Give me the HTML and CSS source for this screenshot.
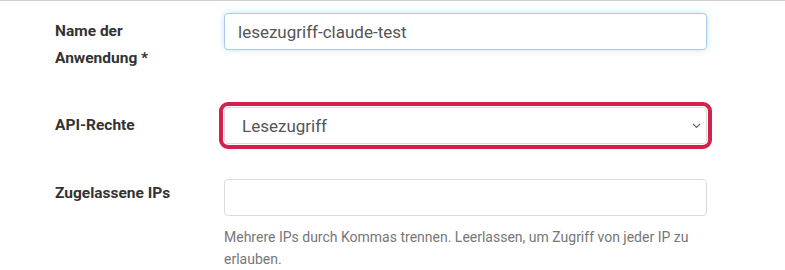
FILE: index.html
```html
<!DOCTYPE html>
<html lang="de">
<head>
    <meta charset="UTF-8">
    <meta name="viewport" content="width=device-width, initial-scale=1.0">
    <title>Anwendung</title>
    <link rel="stylesheet" href="styles.css">
</head>
<body>
    <div class="form">
        <div class="form-row">
            <label for="appname">Name der Anwendung *</label>
            <div class="field">
                <input type="text" id="appname" class="focused" value="lesezugriff-claude-test">
            </div>
        </div>
        <div class="form-row">
            <label for="rights">API-Rechte</label>
            <div class="field select-wrap">
                <select id="rights" class="highlight">
                    <option>Lesezugriff</option>
                    <option>Schreibzugriff</option>
                </select>
                <svg class="chevron" width="9" height="6" viewBox="0 0 9 6">
                    <path d="M1 1 L4.5 4.5 L8 1" fill="none" stroke="#666" stroke-width="1.2"/>
                </svg>
            </div>
        </div>
        <div class="form-row ips">
            <label for="ips">Zugelassene IPs</label>
            <div class="field">
                <input type="text" id="ips">
                <p class="help">Mehrere IPs durch Kommas trennen. Leerlassen, um Zugriff von jeder IP zu erlauben.</p>
            </div>
        </div>
    </div>
</body>
</html>
```

FILE: styles.css
```css
* {
    margin: 0px;
    padding: 0px;
    box-sizing: border-box;
}
body{
    font-family: Roboto, "Noto Sans", sans-serif;
    background: #fff;
    color: #333;
    border-top: 1px solid #cfcfcf;
    overflow: hidden;
}
.form{
    padding: 12px 0 0 55px;
}
.form-row{
    display: grid;
    grid-template-columns: 169px 483px;
    margin-bottom: 35px;
}
.form-row:last-child{
    margin-bottom: 0;
}
.form-row label{
    font-size: 15.5px;
    font-weight: 700;
    line-height: 27px;
    padding-top: 5px;
    padding-right: 50px;
    color: #333;
}
.form-row.ips label{
    padding-top: 1px;
}
.field input,
.field select{
    display: block;
    width: 100%;
    height: 37px;
    padding: 0 13px;
    font-family: Roboto, "Noto Sans", sans-serif;
    font-size: 17px;
    color: #555;
    background: #fff;
    border: 1px solid #dcdcdc;
    border-radius: 4px;
    outline: none;
}
.field input.focused{
    border-color: #a9cbe8;
    box-shadow: 0 0 6px rgba(102, 175, 233, 0.35);
}
.select-wrap{
    position: relative;
}
.field select{
    appearance: none;
    -webkit-appearance: none;
    padding-left: 17px;
}
.field select.highlight{
    outline: 4px solid #d3204c;
    outline-offset: 1px;
    border-radius: 4px;
}
.chevron{
    position: absolute;
    right: 6px;
    top: 16px;
    pointer-events: none;
}
.help{
    margin-top: 10px;
    font-size: 14px;
    line-height: 22px;
    color: #777;
}
```
